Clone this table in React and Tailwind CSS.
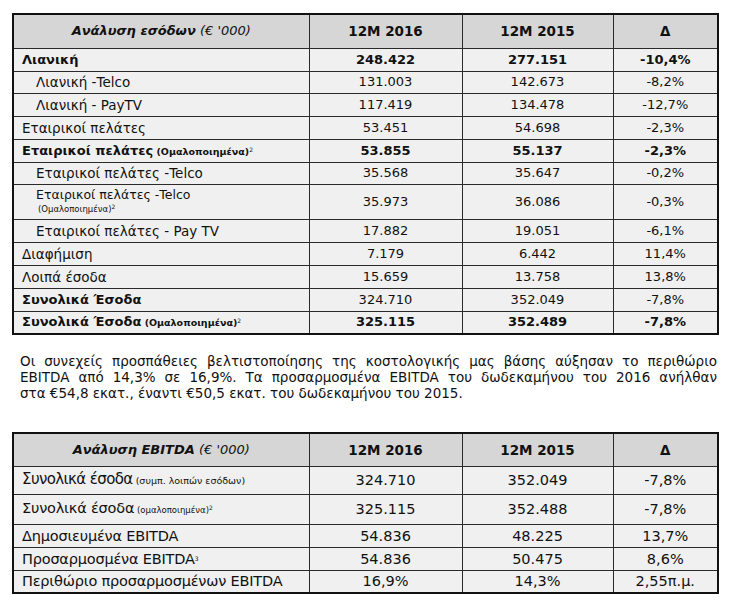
const font = { fontFamily: '"DejaVu Sans", Verdana, sans-serif' };

const revenue = [
  { label: 'Λιανική', a: '248.422', b: '277.151', d: '-10,4%', bold: true, h: 'h-[23px]' },
  { label: 'Λιανική -Telco', a: '131.003', b: '142.673', d: '-8,2%', indent: true, h: 'h-[22px]' },
  { label: 'Λιανική - PayTV', a: '117.419', b: '134.478', d: '-12,7%', indent: true, h: 'h-[23px]' },
  { label: 'Εταιρικοί πελάτες', a: '53.451', b: '54.698', d: '-2,3%', h: 'h-[23px]' },
  { label: 'Εταιρικοί πελάτες', note: '(Ομαλοποιημένα)', sup: '2', a: '53.855', b: '55.137', d: '-2,3%', bold: true, h: 'h-[23px]' },
  { label: 'Εταιρικοί πελάτες -Telco', a: '35.568', b: '35.647', d: '-0,2%', indent: true, h: 'h-[22px]' },
  { label: 'Εταιρικοί πελάτες -Telco', sub: '(Ομαλοποιημένα)', sup: '2', a: '35.973', b: '36.086', d: '-0,3%', indent: true, h: 'h-[35px]' },
  { label: 'Εταιρικοί πελάτες - Pay TV', a: '17.882', b: '19.051', d: '-6,1%', indent: true, h: 'h-[23px]' },
  { label: 'Διαφήμιση', a: '7.179', b: '6.442', d: '11,4%', h: 'h-[23px]' },
  { label: 'Λοιπά έσοδα', a: '15.659', b: '13.758', d: '13,8%', h: 'h-[23px]' },
  { label: 'Συνολικά Έσοδα', a: '324.710', b: '352.049', d: '-7,8%', boldLabel: true, h: 'h-[23px]' },
  { label: 'Συνολικά Έσοδα', note: '(Ομαλοποιημένα)', sup: '2', a: '325.115', b: '352.489', d: '-7,8%', bold: true, h: 'h-[23px]' },
];

const ebitda = [
  { label: 'Συνολικά έσοδα', note: '(συμπ. λοιπών εσόδων)', a: '324.710', b: '352.049', d: '-7,8%', big: true, h: 'h-[28px]' },
  { label: 'Συνολικά έσοδα', note: '(ομαλοποιημένα)', sup: '2', a: '325.115', b: '352.488', d: '-7,8%', h: 'h-[30px]' },
  { label: 'Δημοσιευμένα EBITDA', a: '54.836', b: '48.225', d: '13,7%', h: 'h-[23px]' },
  { label: 'Προσαρμοσμένα EBITDA', sup: '3', a: '54.836', b: '50.475', d: '8,6%', h: 'h-[23px]' },
  { label: 'Περιθώριο προσαρμοσμένων EBITDA', a: '16,9%', b: '14,3%', d: '2,55π.μ.', h: 'h-[23px]' },
];

const cell = 'border border-[#2a2a2a] p-0 leading-[16px]';

function Header({ title, h }) {
  return (
    <tr className={`${h} bg-[#d6d6d6] text-[#111]`}>
      <th className={`${cell} text-center text-[13px] font-normal`}>
        <span className="font-bold italic">{title}</span> <span className="italic">(€ '000)</span>
      </th>
      <th className={`${cell} text-center text-[13.5px] font-bold`}>12M 2016</th>
      <th className={`${cell} text-center text-[13.5px] font-bold`}>12M 2015</th>
      <th className={`${cell} text-center text-[13.5px] font-bold`}>Δ</th>
    </tr>
  );
}

function Row({ r }) {
  const num = r.bold ? 'text-[13px] font-bold' : 'text-[13px]';
  return (
    <tr className={`${r.h} bg-[#f0f0f0] text-[#111]`}>
      <td className={`${cell} ${r.indent ? 'pl-[22px]' : 'pl-[8px]'}`}>
        {r.sub ? (
          <div className="leading-[15px]">
            <div className="text-[12.5px]">{r.label}</div>
            <div className="pl-[2px] text-[8.5px]">
              {r.sub}
              <sup className="text-[6px]">{r.sup}</sup>
            </div>
          </div>
        ) : (
          <span className={r.bold || r.boldLabel ? 'text-[13px] font-bold' : 'text-[13.5px]'}>
            {r.label}
            {r.note && <span className="text-[9.5px]"> {r.note}</span>}
            {r.sup && <sup className="text-[6px] font-normal">{r.sup}</sup>}
          </span>
        )}
      </td>
      <td className={`${cell} text-center ${num}`}>{r.a}</td>
      <td className={`${cell} text-center ${num}`}>{r.b}</td>
      <td className={`${cell} text-center ${num}`}>{r.d}</td>
    </tr>
  );
}

function EbitdaRow({ r }) {
  return (
    <tr className={`${r.h} bg-[#f0f0f0] text-[#111]`}>
      <td className={`${cell} pl-[8px]`}>
        <span className={r.big ? 'text-[15px] tracking-[-0.6px]' : 'text-[14.5px] tracking-[-0.2px]'}>
          {r.label}
          {r.note && <span className={r.big ? 'text-[9.5px] tracking-normal' : 'text-[8.5px] tracking-normal'}> {r.note}</span>}
          {r.sup && <sup className="text-[6px]">{r.sup}</sup>}
        </span>
      </td>
      <td className={`${cell} text-center text-[14.5px]`}>{r.a}</td>
      <td className={`${cell} text-center text-[14.5px]`}>{r.b}</td>
      <td className={`${cell} text-center text-[14.5px]`}>{r.d}</td>
    </tr>
  );
}

function Table({ title, headerH, children }) {
  return (
    <table className="w-[705px] table-fixed border-collapse border-2 border-[#111]">
      <colgroup>
        <col className="w-[296px]" />
        <col className="w-[153px]" />
        <col className="w-[151px]" />
        <col className="w-[105px]" />
      </colgroup>
      <thead>
        <Header title={title} h={headerH} />
      </thead>
      <tbody>{children}</tbody>
    </table>
  );
}

export default function App() {
  return (
    <div className="w-[735px] h-[611px] bg-white pl-[12px] pt-[13px]" style={font}>
      <Table title="Ανάλυση εσόδων" headerH="h-[34px]">
        {revenue.map((r, i) => (
          <Row key={i} r={r} />
        ))}
      </Table>

      <div className="mt-[18px] ml-[8px] w-[697px] text-[13.5px] leading-[16px] text-[#111]">
        <p className="text-justify [text-align-last:justify]">
          Οι συνεχείς προσπάθειες βελτιστοποίησης της κοστολογικής μας βάσης αύξησαν το περιθώριο
        </p>
        <p className="text-justify [text-align-last:justify]">
          EBITDA από 14,3% σε 16,9%. Τα προσαρμοσμένα EBITDA του δωδεκαμήνου του 2016 ανήλθαν
        </p>
        <p>στα €54,8 εκατ., έναντι €50,5 εκατ. του δωδεκαμήνου του 2015.</p>
      </div>

      <div className="mt-[31px]">
        <Table title="Ανάλυση EBITDA" headerH="h-[33px]">
          {ebitda.map((r, i) => (
            <EbitdaRow key={i} r={r} />
          ))}
        </Table>
      </div>
    </div>
  );
}
